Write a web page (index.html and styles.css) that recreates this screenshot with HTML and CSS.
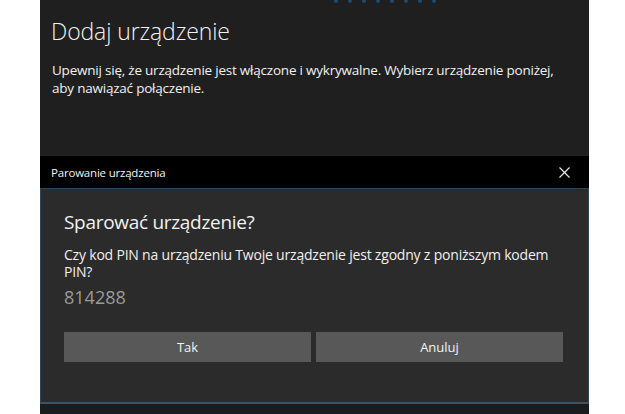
FILE: index.html
```html
<!DOCTYPE html>
<html lang="pl">
<head>
<meta charset="utf-8">
<link rel="stylesheet" href="styles.css">
</head>
<body>
<div class="panel">
  <section class="page">
    <div class="cut-link"><span></span><span></span><span></span><span></span><span></span><span></span><span></span><span></span></div>
    <h1 class="page-title">Dodaj urządzenie</h1>
    <p class="page-desc">Upewnij się, że urządzenie jest włączone i wykrywalne. Wybierz urządzenie poniżej, aby nawiązać połączenie.</p>
  </section>
  <div class="dialog">
    <header class="dialog-bar">
      <span class="dialog-bar-title">Parowanie urządzenia</span>
      <svg class="close" width="11" height="11" viewBox="0 0 11 11"><path d="M0.5 0.5 L10.5 10.5 M10.5 0.5 L0.5 10.5" stroke="#e6e6e6" stroke-width="1.2" fill="none"/></svg>
    </header>
    <div class="dialog-body">
      <h2 class="dialog-title">Sparować urządzenie?</h2>
      <p class="dialog-text">Czy kod PIN na urządzeniu Twoje urządzenie jest zgodny z poniższym kodem PIN?</p>
      <div class="pin">814288</div>
      <div class="buttons">
        <button class="btn">Tak</button>
        <button class="btn">Anuluj</button>
      </div>
    </div>
  </div>
  <div class="below"></div>
</div>
</body>
</html>
```
FILE: styles.css
```css
html, body {
  margin: 0;
  padding: 0;
  background: #ffffff;
}
body {
  font-family: "Open Sans", "Noto Sans", sans-serif;
  color: #ffffff;
}
.panel {
  margin-left: 40px;
  width: 549px;
  height: 414px;
  display: flex;
  flex-direction: column;
  background: #1f1f1f;
}
.page {
  height: 156px;
  padding: 0 0 0 11px;
  box-sizing: border-box;
  background: #1f1f1f;
}
.cut-link {
  display: flex;
  gap: 10px;
  margin-left: 283px;
  height: 4px;
}
.cut-link span {
  width: 4px;
  height: 3px;
  border-radius: 0 0 3px 3px;
  background: #1b4a72;
}
.page-title {
  margin: 12px 0 0 0;
  font-weight: 300;
  font-size: 23px;
  line-height: 30px;
  letter-spacing: -0.1px;
  color: #f2f2f2;
}
.page-desc {
  margin: 15px 0 0 1px;
  font-size: 13.5px;
  line-height: 18px;
  letter-spacing: -0.22px;
  width: 505px;
  color: #f0f0f0;
}
.dialog {
  display: flex;
  flex-direction: column;
}
.dialog-bar {
  height: 32px;
  background: #000000;
  display: flex;
  align-items: center;
  justify-content: space-between;
  padding: 0 19px 0 11px;
  box-sizing: border-box;
}
.dialog-bar-title {
  font-size: 11.5px;
  letter-spacing: -0.2px;
  color: #f2f2f2;
}
.close {
  display: block;
}
.dialog-body {
  height: 216px;
  box-sizing: border-box;
  background: #2b2b2b;
  border: 1px solid #2e4457;
  border-bottom: 2px solid #3a5368;
  padding: 19px 25px 0 23px;
}
.dialog-title {
  margin: 0;
  font-weight: 400;
  font-size: 19px;
  line-height: 28px;
  letter-spacing: -0.3px;
  color: #f2f2f2;
}
.dialog-text {
  margin: 10px 0 0 0;
  font-size: 14px;
  line-height: 17px;
  letter-spacing: -0.2px;
  width: 485px;
  color: #f0f0f0;
}
.pin {
  margin-top: 5px;
  font-size: 18px;
  line-height: 24px;
  color: #9a9a9a;
}
.buttons {
  display: grid;
  grid-template-columns: 1fr 1fr;
  gap: 5px;
  margin-top: 23px;
}
.btn {
  height: 30px;
  border: none;
  background: #585858;
  color: #f2f2f2;
  font-family: "Open Sans", "Noto Sans", sans-serif;
  font-size: 13px;
  padding: 0;
}
.below {
  flex: 1;
  background: #1a1c1e;
}
```
